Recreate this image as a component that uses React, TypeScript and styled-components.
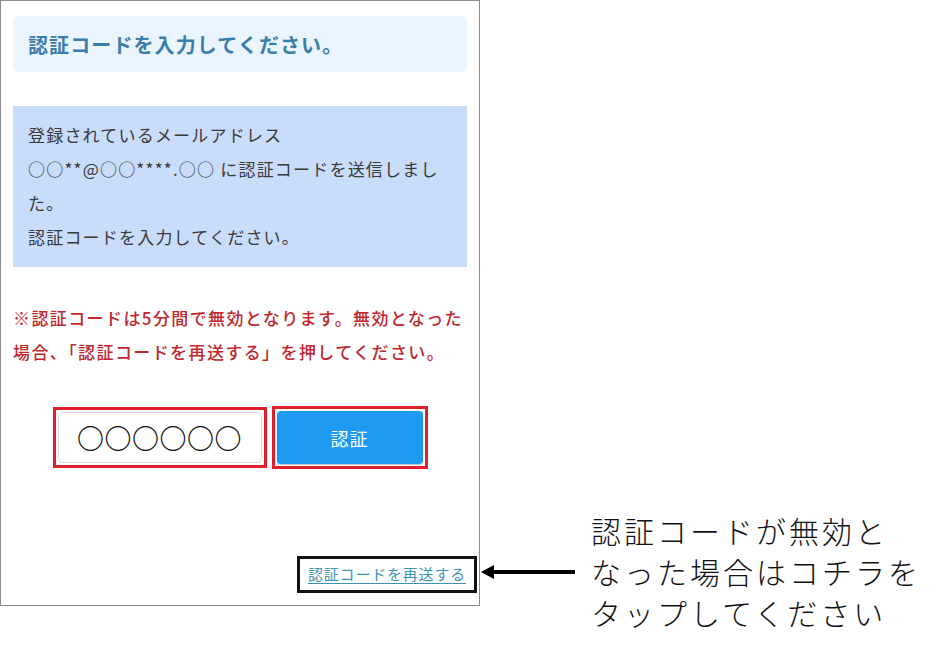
import React from "react";
import styled, { createGlobalStyle } from "styled-components";

const GlobalStyle = createGlobalStyle`
  html, body {
    margin: 0;
    padding: 0;
    background: #ffffff;
  }
  body {
    font-family: "Noto Sans CJK JP", "Noto Sans", sans-serif;
    color: #333333;
  }
`;

const Page = styled.div`
  display: flex;
  align-items: flex-start;
  width: 943px;
  height: 653px;
`;

const PhoneFrame = styled.main`
  box-sizing: border-box;
  width: 480px;
  height: 606px;
  border: 1px solid #8c8c8c;
  padding: 15px 12px 12px;
  display: flex;
  flex-direction: column;
`;

const TitleBox = styled.div`
  height: 56px;
  box-sizing: border-box;
  padding: 0 15px;
  display: flex;
  align-items: center;
  background: #eaf5fd;
  border-radius: 5px;
`;

const Title = styled.h1`
  margin: 0;
  font-size: 20px;
  font-weight: 700;
  letter-spacing: 1.1px;
  color: #3b7dab;
`;

const InfoBox = styled.div`
  margin-top: 34px;
  padding: 12px 15px 13px;
  background: #c9dcfa;
  font-size: 17px;
  line-height: 34px;
  letter-spacing: 1.2px;
  color: #3a3a3a;
`;

const Notice = styled.p`
  margin: 34px 0 0;
  font-size: 17px;
  line-height: 34px;
  letter-spacing: 1.4px;
  font-weight: 500;
  color: #c1272d;
`;

const CodeRow = styled.div`
  margin-top: 37px;
  display: flex;
  justify-content: center;
  align-items: center;
  gap: 5px;
`;

const Highlight = styled.div<{ tone: "red" | "black" }>`
  display: flex;
  padding: ${({ tone }) => (tone === "red" ? "2px" : "0")};
  border: 3px solid ${({ tone }) => (tone === "red" ? "#df1f2b" : "#111111")};
`;

const CodeInput = styled.div`
  box-sizing: border-box;
  width: 204px;
  height: 51px;
  border: 1px solid #dcdcdc;
  border-radius: 4px;
  background: #ffffff;
  display: flex;
  align-items: center;
  justify-content: center;
  font-size: 27px;
  font-weight: 700;
  letter-spacing: 0.5px;
  color: #111111;
`;

const VerifyButton = styled.button`
  width: 146px;
  height: 53px;
  border: none;
  border-radius: 4px;
  background: #1e9bf0;
  box-shadow: 0 1px 1px rgba(0, 0, 0, 0.25);
  color: #ffffff;
  font-family: inherit;
  font-size: 18px;
  letter-spacing: 1px;
  cursor: pointer;
`;

const Spacer = styled.div`
  flex: 1;
`;

const LinkRow = styled.div`
  display: flex;
  justify-content: flex-end;
  margin-right: -10px;
`;

const ResendLink = styled.a`
  display: block;
  padding: 5px 8px 6px 8px;
  font-size: 15px;
  line-height: 20px;
  letter-spacing: 0.8px;
  color: #3d93b6;
  text-decoration: underline;
  text-underline-offset: 3px;
  cursor: pointer;
`;

const Annotation = styled.aside`
  display: flex;
  align-items: center;
  margin-top: 510px;
`;

const Arrow = styled.svg`
  display: block;
  margin: 0 16px 0 1px;
`;

const AnnotationText = styled.p`
  margin: 0;
  font-size: 30px;
  line-height: 41px;
  letter-spacing: 3px;
  font-weight: 300;
  color: #111111;
`;

export default function App() {
  return (
    <>
      <GlobalStyle />
      <Page>
        <PhoneFrame>
          <TitleBox>
            <Title>認証コードを入力してください。</Title>
          </TitleBox>
          <InfoBox>
            登録されているメールアドレス
            <br />
            ○○**@○○****.○○ に認証コードを送信しました。
            <br />
            認証コードを入力してください。
          </InfoBox>
          <Notice>
            ※認証コードは5分間で無効となります。無効となった場合、「認証コードを再送する」を押してください。
          </Notice>
          <CodeRow>
            <Highlight tone="red">
              <CodeInput>○○○○○○</CodeInput>
            </Highlight>
            <Highlight tone="red">
              <VerifyButton>認証</VerifyButton>
            </Highlight>
          </CodeRow>
          <Spacer />
          <LinkRow>
            <Highlight tone="black">
              <ResendLink>認証コードを再送する</ResendLink>
            </Highlight>
          </LinkRow>
        </PhoneFrame>
        <Annotation>
          <Arrow width="94" height="16" viewBox="0 0 94 16">
            <path d="M0 8 L13 1 L13 6 L94 6 L94 10 L13 10 L13 15 Z" fill="#000" />
          </Arrow>
          <AnnotationText>
            認証コードが無効と
            <br />
            なった場合はコチラを
            <br />
            タップしてください
          </AnnotationText>
        </Annotation>
      </Page>
    </>
  );
}
